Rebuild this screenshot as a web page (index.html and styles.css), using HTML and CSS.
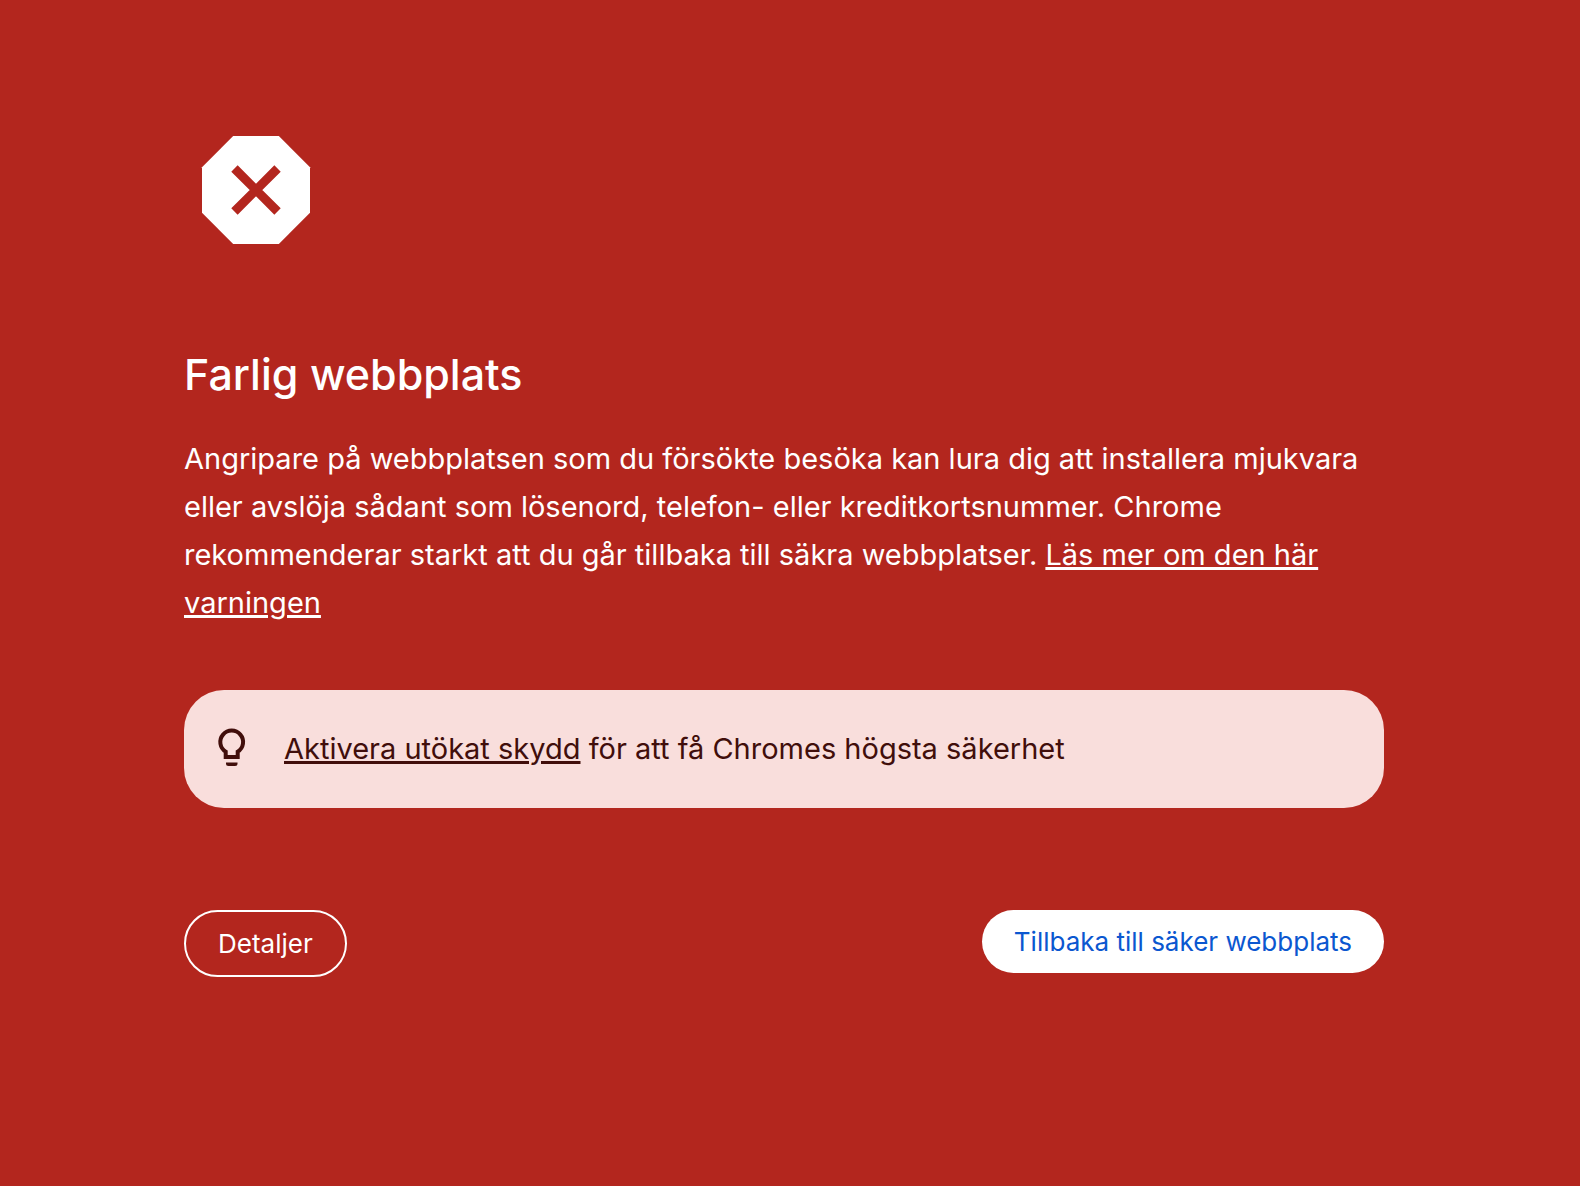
FILE: index.html
```html
<!DOCTYPE html>
<html lang="sv">
<head>
<meta charset="utf-8">
<meta name="viewport" content="width=device-width, initial-scale=1">
<title>Farlig webbplats</title>
<link rel="stylesheet" href="styles.css">
</head>
<body>
<main class="interstitial">
  <svg class="warning-icon" viewBox="0 0 24 24" aria-hidden="true">
    <path fill="currentColor" d="M8.200 3 3 8.200v7.600L8.200 21h7.600L21 15.800V8.200L15.800 3z"/>
    <path class="cross" d="M8.410 8.410l7.180 7.180M15.590 8.410l-7.180 7.180"/>
  </svg>
  <h1 class="title">Farlig webbplats</h1>
  <p class="message">Angripare på webbplatsen som du försökte besöka kan lura dig att installera mjukvara eller avslöja sådant som lösenord, telefon- eller kreditkortsnummer. Chrome rekommenderar starkt att du går tillbaka till säkra webbplatser. <a href="#">Läs mer om den här varningen</a></p>
  <div class="promo">
    <svg class="bulb-icon" viewBox="0 0 48 48" aria-hidden="true">
      <path d="M17.700 32.100v-5.400a11.400 11.400 0 1 1 12 0v5.400z" fill="none" stroke="currentColor" stroke-width="4"/>
      <path d="M18 37.500h11.500v1a2.500 2.500 0 0 1-2.500 2.500h-6.500a2.500 2.500 0 0 1-2.500-2.500z" fill="currentColor"/>
    </svg>
    <p class="promo-text"><a href="#">Aktivera utökat skydd</a> för att få Chromes högsta säkerhet</p>
  </div>
  <div class="actions">
    <button class="button details" type="button">Detaljer</button>
    <button class="button primary" type="button">Tillbaka till säker webbplats</button>
  </div>
</main>
</body>
</html>
```
FILE: styles.css
```css
* { box-sizing: border-box; }
body {
  margin: 0;
  padding-right: 12px;
  background: #b3261e;
  color: #fff;
  font-family: Inter, "Liberation Sans", sans-serif;
  font-size: 29px;
  line-height: 48px;
}
a { color: inherit; text-decoration-thickness: 3px; text-underline-offset: 2px; }
.interstitial {
  max-width: 1200px;
  margin: 0 auto;
  padding-top: 118px;
}
.warning-icon { display: block; width: 144px; height: 144px; }
.cross { stroke: #b3261e; stroke-width: 1.5; }
.title {
  margin: 83px 0 32px;
  font-size: 43px;
  font-weight: 500;
  line-height: 58px;
}
.message { margin: 0; }
.promo {
  display: flex;
  align-items: center;
  gap: 28px;
  margin-top: 63px;
  padding: 35px 24px;
  border-radius: 40px;
  background: #f9dedc;
  color: #410e0b;
}
.bulb-icon { flex: none; width: 48px; height: 48px; }
.promo-text { margin: 0; }
.actions {
  display: flex;
  justify-content: space-between;
  align-items: flex-start;
  margin-top: 102px;
}
.button {
  padding: 16px 32px;
  border: 0;
  border-radius: 40px;
  font: inherit;
  font-size: 26px;
  line-height: 31px;
}
.details { border: 2px solid #fff; background: transparent; color: #fff; }
.primary { background: #fff; color: #0b57d0; }
```
